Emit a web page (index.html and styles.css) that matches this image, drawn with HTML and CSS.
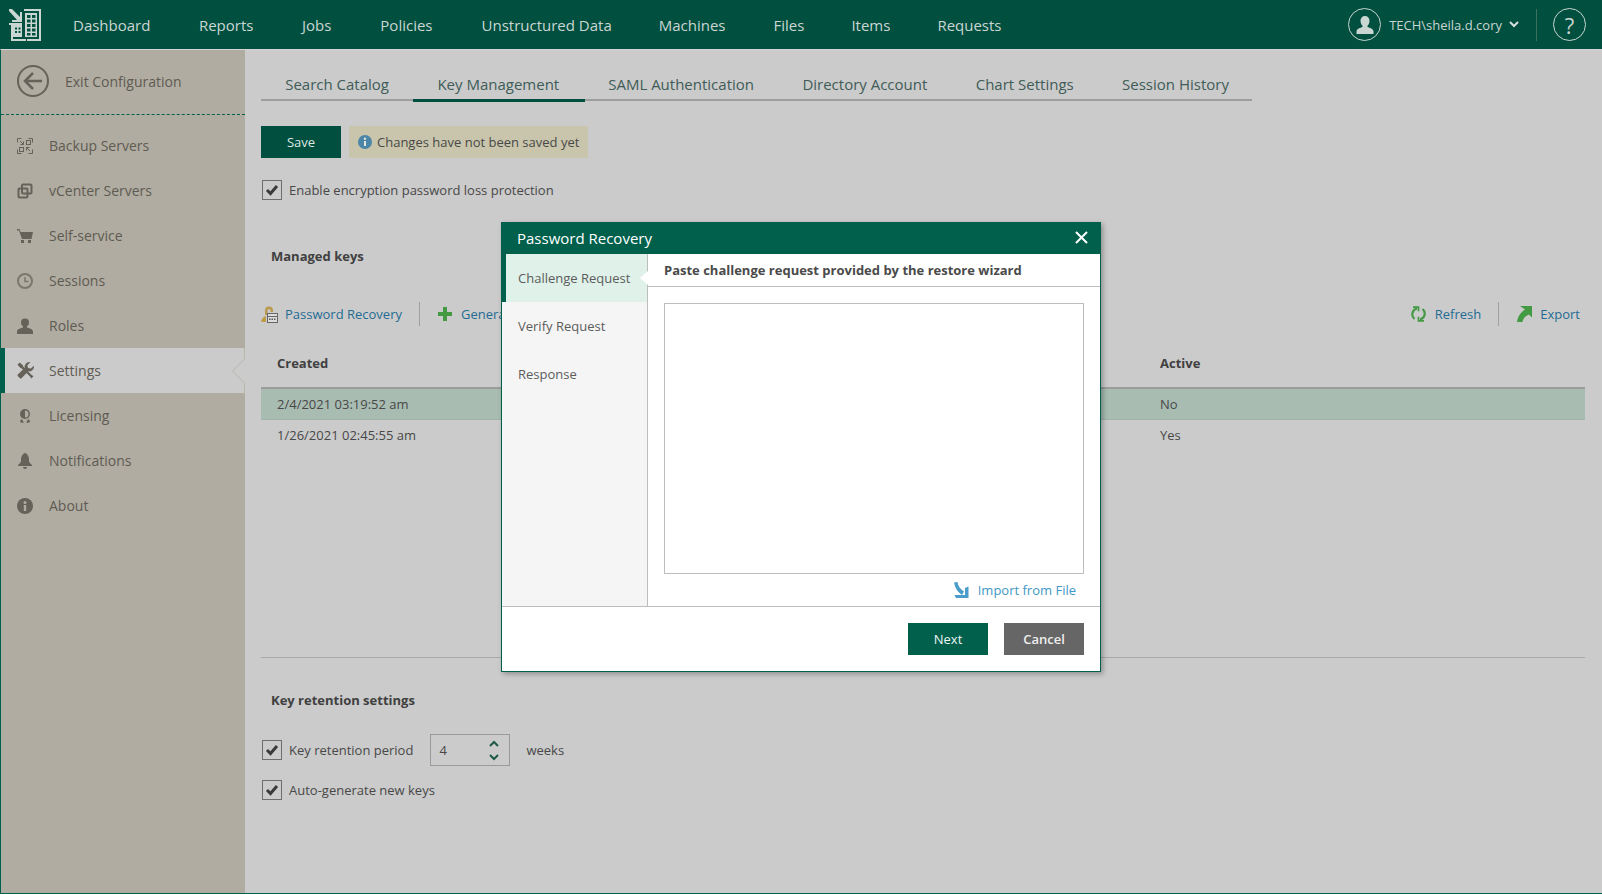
FILE: index.html
```html
<!DOCTYPE html>
<html lang="en">
<head>
<meta charset="utf-8">
<title>Key Management</title>
<link rel="stylesheet" href="styles.css">
</head>
<body>
<header class="topbar">
  <svg class="logo" width="32" height="32" viewBox="0 0 32 32" fill="#c9d6d2"><path d="M15 0h17v32H18v-2h12V2H15z"/><path d="M0 0h3l8 8V3h2v10H3v-2h5L0 2z"/><path d="M0 14h13v2H0zM0 16h2v16h15v-2H4V16z"/><path d="M16 4h12v24H16zM4 16h9v12H4z"/><path d="M18 6h3.500v3H18zM23 6h3.500v3H23zM18 10.500h3.500v3H18zM23 10.500h3.500v3H23zM18 15h3.500v3H18zM23 15h3.500v3H23zM18 19.500h3.500v3H18zM23 19.500h3.500v3H23zM18 24h3.500v2.500H18zM23 24h3.500v2.500H23zM6 18.500h2v2H6zM9.500 18.500h2v2h-2zM6 22h2v2H6zM9.500 22h2v2h-2z" fill="#004f3f"/></svg>
  <nav class="topnav">
    <a>Dashboard</a><a>Reports</a><a>Jobs</a><a>Policies</a><a>Unstructured Data</a><a>Machines</a><a>Files</a><a>Items</a><a>Requests</a>
  </nav>
  <div class="account">
    <span class="round"><svg width="20" height="20" viewBox="0 0 20 20"><path d="M10 1a4.500 4.500 0 0 1 4.500 5c0 2-1 4-2 4.800v1.200c2 1 6 1.500 6 4.500V19h-17v-2.500c0-3 4-3.500 6-4.500v-1.200c-1-.8-2-2.800-2-4.800A4.500 4.500 0 0 1 10 1z" fill="#c9d6d2"/></svg></span>
    <span class="user">TECH\sheila.d.cory</span>
    <svg width="10" height="7" viewBox="0 0 10 7"><path d="M1 1l4 4 4-4" fill="none" stroke="#d5dfdc" stroke-width="2"/></svg>
    <span class="vsep"></span>
    <span class="round help">?</span>
  </div>
</header>
<div class="shell">
  <aside class="sidebar">
    <div class="exit">
      <svg width="32" height="32" viewBox="0 0 32 32"><circle cx="16" cy="16" r="15" fill="none" stroke="#66625a" stroke-width="2"/><path d="M25 16H9M16 8l-8 8 8 8" fill="none" stroke="#66625a" stroke-width="2.500"/></svg>
      <span>Exit Configuration</span>
    </div>
    <ul class="menu">
      <li><svg width="16" height="16" viewBox="0 0 16 16" fill="none" stroke="#66625a"><path d="M.5 4.500v-4h4M11.500.5h4v4M15.500 11.500v4h-4M4.500 15.500h-4v-4"/><path d="M3 3l3.500 3.500M13 13L9.500 9.500M6.500 3.500v3h-3M9.500 12.500v-3h3"/><rect x="9.500" y="2.500" width="4" height="4"/><rect x="2.500" y="9.500" width="4" height="4"/></svg>Backup Servers</li>
      <li><svg width="16" height="16" viewBox="0 0 16 16" fill="none" stroke="#66625a" stroke-width="2"><rect x="5" y="1.500" width="9.500" height="9" rx="1"/><rect x="1.500" y="5.500" width="9" height="9" rx="1"/></svg>vCenter Servers</li>
      <li><svg width="16" height="16" viewBox="0 0 16 16" fill="#66625a"><path d="M0 1h2.500l1 3H16l-1.500 7H5L2 2.500H0z"/><rect x="4" y="12" width="3" height="3"/><rect x="11" y="12" width="3" height="3"/></svg>Self-service</li>
      <li><svg width="16" height="16" viewBox="0 0 16 16" fill="none" stroke="#7b776e" stroke-width="2"><circle cx="8" cy="8" r="7"/><path d="M8 4v4.500h3.500" stroke-width="1.500"/></svg>Sessions</li>
      <li><svg width="16" height="16" viewBox="0 0 16 16" fill="#66625a"><circle cx="8" cy="4.500" r="4"/><path d="M6 8h4v1.500c2 .8 6 1.500 6 4V16H0v-2.500c0-2.500 4-3.200 6-4z"/></svg>Roles</li>
      <li class="current"><svg width="17" height="17" viewBox="0 0 16 16" fill="#66625a"><path d="M2.500 .5L.5 2.500 3 5.500l1.500.5L12 13.500l1.500 2 2-2-2-1.500L6 4.500 5.500 3z"/><path d="M15.800 3.500L13 6.200l-2.700-.5L9.800 3l2.700-2.800a4.300 4.300 0 0 0-5.200 5.200L.5 12v1l2.500 2.500h1l6.600-6.800a4.300 4.300 0 0 0 5.200-5.200z"/></svg>Settings<svg class="pointer" width="13" height="46" viewBox="0 0 13 46" fill="none" stroke="#b9b5a9"><path d="M12.500 0v11L.5 23l12 12v11"/></svg></li>
      <li><svg width="16" height="16" viewBox="0 0 16 16" fill="#66625a"><path d="M3 6a5 5 0 1 1 10 0A5 5 0 0 1 3 6z"/><path d="M8 2.500a3.500 3.500 0 0 1 0 7z" fill="#b0aca1"/><path d="M4 11l2 1.500.5 2.500-2.500-.5-1-.5zM12 11l-2 1.500-.5 2.500 2.500-.5 1-.5z"/></svg>Licensing</li>
      <li><svg width="16" height="16" viewBox="0 0 16 16" fill="#66625a"><path d="M8 0a2 2 0 0 1 2 1.500C12 3 12 5 12 8c0 1.500 2 3 3 4v1H1v-1c1-1 3-2.500 3-4 0-3 0-5 2-6.500A2 2 0 0 1 8 0zM6 14h4a2 2 0 0 1-4 0z"/></svg>Notifications</li>
      <li><svg width="16" height="16" viewBox="0 0 16 16"><circle cx="8" cy="8" r="8" fill="#66625a"/><rect x="6.800" y="7" width="2.400" height="6" fill="#b0aca1"/><circle cx="8" cy="4.500" r="1.500" fill="#b0aca1"/></svg>About</li>
    </ul>
  </aside>
  <main class="content">
    <div class="tabs">
      <a>Search Catalog</a><a class="active">Key Management</a><a>SAML Authentication</a><a>Directory Account</a><a>Chart Settings</a><a>Session History</a>
    </div>
    <div class="savebar">
      <button class="btn dark">Save</button>
      <div class="notice"><svg width="14" height="14" viewBox="0 0 14 14"><circle cx="7" cy="7" r="7" fill="#4b86a8"/><rect x="6" y="6" width="2" height="5" fill="#e4e4d8"/><circle cx="7" cy="3.800" r="1.200" fill="#e4e4d8"/></svg>Changes have not been saved yet</div>
    </div>
    <label class="check first"><span class="box"><svg width="14" height="12" viewBox="0 0 14 12"><path d="M2 6l3.500 3.500L12 2" fill="none" stroke="#3a3a3a" stroke-width="3"/></svg></span>Enable encryption password loss protection</label>
    <h2 class="section managed">Managed keys</h2>
    <div class="toolbar">
      <div class="tools">
        <a class="tool"><svg width="17" height="17" viewBox="0 0 17 17"><path d="M4 9V4.500a4 4 0 0 1 8 0V6H9.500V4.500a1.500 1.500 0 0 0-3 0V9z" fill="#b99a4e"/><path d="M0 14.500l3-4h2V16H1z" fill="#c09b45"/><rect x="6.500" y="7.500" width="10" height="9" fill="#dcdcdc" stroke="#666"/><path d="M6 10.500h10" stroke="#666"/><path d="M8 12.500h1.500v1.500H8zM10.500 12.500H12v1.500h-1.500zM13 12.500h1.500v1.500H13z" fill="#555"/></svg>Password Recovery</a>
        <span class="tsep"></span>
        <a class="tool gen"><svg width="14" height="14" viewBox="0 0 14 14"><path d="M5 0h4v5h5v4H9v5H5V9H0V5h5z" fill="#439a43"/></svg>Generate</a>
      </div>
      <div class="tools">
        <a class="tool refresh"><svg width="15" height="16" viewBox="0 0 15 16" fill="none" stroke="#439a43" stroke-width="2.200"><path d="M3.500 13A6 6 0 0 1 6 2.500M11.500 3a6 6 0 0 1-2.500 10.500"/><path d="M2 1.200h5.500v4M13 14.800H7.500v-4" stroke-width="1.700"/></svg>Refresh</a>
        <span class="tsep"></span>
        <a class="tool export"><svg width="15" height="16" viewBox="0 0 15 16"><path d="M3 0h12v11.500L12 8.500C8.500 10 6 12 5.500 16H0C1 10 4 6 8 3.500z" fill="#439a43"/></svg>Export</a>
      </div>
    </div>
    <div class="table">
      <div class="thead"><span>Created</span><span>Active</span></div>
      <div class="row selected"><span>2/4/2021 03:19:52 am</span><span>No</span></div>
      <div class="row plain"><span>1/26/2021 02:45:55 am</span><span>Yes</span></div>
    </div>
    <h2 class="section retention">Key retention settings</h2>
    <div class="retrow">
      <label class="check"><span class="box"><svg width="14" height="12" viewBox="0 0 14 12"><path d="M2 6l3.500 3.500L12 2" fill="none" stroke="#3a3a3a" stroke-width="3"/></svg></span>Key retention period</label>
      <div class="spinner"><span>4</span><span class="arrows"><svg width="10" height="7" viewBox="0 0 10 7"><path d="M1 6l4-4 4 4" fill="none" stroke="#1f5a48" stroke-width="2"/></svg><svg width="10" height="7" viewBox="0 0 10 7"><path d="M1 1l4 4 4-4" fill="none" stroke="#1f5a48" stroke-width="2"/></svg></span></div>
      <span class="weeks">weeks</span>
    </div>
    <label class="check auto"><span class="box"><svg width="14" height="12" viewBox="0 0 14 12"><path d="M2 6l3.500 3.500L12 2" fill="none" stroke="#3a3a3a" stroke-width="3"/></svg></span>Auto-generate new keys</label>
  </main>
</div>
<section class="dialog">
  <div class="dtitle"><span>Password Recovery</span><svg width="13" height="13" viewBox="0 0 13 13"><path d="M1 1l11 11M12 1L1 12" stroke="#fff" stroke-width="2"/></svg></div>
  <div class="dbody">
    <ul class="steps">
      <li class="on">Challenge Request<span class="notch"></span></li>
      <li>Verify Request</li>
      <li>Response</li>
    </ul>
    <div class="pane">
      <div class="panehead">Paste challenge request provided by the restore wizard</div>
      <div class="panebody">
        <div class="textarea"></div>
        <a class="import"><svg width="15" height="17" viewBox="0 0 15 17" fill="#4a9ccb"><path d="M3.500 0C4 4 6 7 10 9.500L8 13C3.500 10 1 6 0 .5z"/><path d="M14.500 4.500V16H2l-1.500-3H11V6z"/></svg>Import from File</a>
      </div>
    </div>
  </div>
  <div class="dfoot"><button class="btn green">Next</button><button class="btn gray">Cancel</button></div>
</section>
</body>
</html>
```
FILE: styles.css
```css
* { box-sizing: border-box; }
html, body { margin: 0; padding: 0; height: 100%; }
body { width: 1602px; height: 894px; overflow: hidden; font-family: "Open Sans", sans-serif; font-size: 13px; color: #484848; background: #cbcbcb; display: flex; flex-direction: column; position: relative; }
svg { display: block; flex: none; }
ul { list-style: none; margin: 0; padding: 0; }

.topbar { height: 49px; flex: none; background: #004f3f; display: flex; align-items: center; color: #c9d6d2; }
.logo { margin-left: 9px; }
.topnav { display: flex; margin-left: 8px; font-size: 15px; }
.topnav a { padding: 0 24px; }
.topnav a:nth-child(n+2) { margin-left: .5px; }
.topnav a:nth-child(n+4) { margin-left: 1px; }
.topnav a:nth-child(n+6) { margin-left: -1px; }
.topnav a:nth-child(n+7) { margin-left: 0; }
.topnav a:nth-child(n+8) { margin-left: -1px; }
.account { margin-left: auto; display: flex; align-items: center; font-size: 13px; }
.round { width: 33px; height: 33px; border: 1.500px solid #c9d6d2; border-radius: 50%; display: flex; align-items: center; justify-content: center; }
.user { margin: 0 7px 0 8px; }
.vsep { width: 1px; height: 32px; background: #3c7061; margin: 0 16px 0 17px; }
.help { font-size: 22px; margin-right: 16px; }

.shell { flex: 1; display: flex; min-height: 0; border-left: 1px solid #00604c; border-bottom: 1px solid #00604c; border-top: 1px solid #d5d5d5; }
.sidebar { width: 244px; flex: none; background: #b0aca1; color: #5f5b53; font-size: 14px; }
.exit { height: 65px; display: flex; align-items: center; gap: 16px; padding: 0 0 2px 16px; border-bottom: 1px dashed #00604c; }
.exit span { color: #5f5b53; }
.menu { margin-top: 8px; }
.menu li { height: 45px; display: flex; align-items: center; gap: 16px; padding-left: 16px; position: relative; }
.menu li.current { background: #cbcbcb; border-left: 4px solid #00604c; padding-left: 12px; gap: 15px; }
.pointer { position: absolute; right: 0; top: 0; }

.content { flex: 1; padding: 0 17px 0 16px; min-width: 0; }
.tabs { width: 991px; margin-top: 18px; height: 33px; display: flex; border-bottom: 2px solid #9e9e9e; font-size: 15px; color: #3f5c58; line-height: 32px; }
.tabs a { padding: 0 24.2px; white-space: nowrap; }
.tabs a.active { border-bottom: 3px solid #004f3f; height: 34px; padding-right: 26px; }
.tabs a.active + a { padding-left: 23px; }
.savebar { margin-top: 25px; display: flex; gap: 8px; }
.btn { width: 80px; height: 32px; border: 0; padding: 0; font: 13px "Open Sans", sans-serif; color: #dfe8e5; }
.btn.dark { background: #004f3f; }
.notice { height: 32px; background: #c9c5ac; display: flex; align-items: center; gap: 5px; padding: 0 9px 0 9px; color: #484848; }
.check { display: flex; align-items: center; gap: 7px; padding-left: 1px; white-space: nowrap; }
.check.first { margin-top: 22px; }
.box { width: 20px; height: 20px; border: 1px solid #6e6e6e; display: flex; align-items: center; justify-content: center; }
.section { margin: 0; padding-left: 10px; font-size: 13px; font-weight: 700; color: #404040; line-height: 18px; }
.managed { margin-top: 47px; }
.toolbar { margin-top: 37px; height: 24px; display: flex; justify-content: space-between; padding-right: 5px; }
.tools { display: flex; align-items: center; }
.tool { display: flex; align-items: center; gap: 7px; color: #246b94; }
.tool.gen { gap: 9px; }
.tool.refresh { gap: 8.500px; }
.tool.export { gap: 8px; }
.tsep { width: 1px; height: 24px; background: #a0a0a0; margin: 0 18px 0 17px; }
.table { margin-top: 15px; }
.thead { height: 48px; border-bottom: 2px solid #9c9c9c; display: flex; justify-content: space-between; align-items: center; padding: 0 0 2px 16px; font-weight: 700; color: #404040; }
.row { display: flex; justify-content: space-between; align-items: center; padding-left: 16px; }
.row.selected { height: 31px; background: #a8bcb2; border-bottom: 1px solid #a0b3aa; }
.row.plain { height: 30px; }
.thead span:last-child, .row span:last-child { width: 425px; }
.retention { padding-top: 33px; border-top: 1px solid #a8a8a8; margin-top: 207px; padding-left: 0; text-indent: 10px; }
.retrow { margin-top: 25px; display: flex; align-items: center; height: 32px; }
.spinner { width: 80px; height: 32px; margin-left: 17px; border: 1px solid #9a9a9a; display: flex; align-items: center; justify-content: space-between; padding: 0 10px 0 8px; }
.arrows { display: flex; flex-direction: column; gap: 7px; }
.weeks { margin-left: 16px; }
.auto { margin-top: 14px; }

.dialog { position: absolute; left: 501px; top: 222px; width: 600px; height: 450px; background: #fff; border: 1px solid #00604c; box-shadow: 2px 2px 5px rgba(0,0,0,.3); display: flex; flex-direction: column; }
.dtitle { height: 31px; flex: none; background: #00604c; color: #fff; font-size: 15px; display: flex; align-items: center; justify-content: space-between; padding: 0 12px 3px 15px; }
.dtitle span { padding-top: 1px; }
.dbody { height: 353px; flex: none; display: flex; border-bottom: 1px solid #bdbdbd; }
.steps { width: 146px; flex: none; background: #f5f5f5; border-right: 1px solid #bdbdbd; }
.steps li { height: 48px; display: flex; align-items: center; padding-left: 16px; color: #5c5c5c; position: relative; }
.steps li.on { background: #dff1e9; box-shadow: inset 4px 0 0 #00604c; }
.notch { position: absolute; right: -1px; top: 17px; width: 8px; height: 14px; background: #fff; clip-path: polygon(100% 0, 100% 100%, 0 50%); }
.pane { flex: 1; min-width: 0; }
.panehead { height: 33px; border-bottom: 1px solid #bdbdbd; padding: 7px 16px 0; font-weight: 700; color: #4a4a4a; }
.panebody { padding: 16px 16px 0; }
.textarea { height: 271px; border: 1px solid #bdbdbd; }
.import { margin-top: 7px; display: flex; align-items: center; justify-content: flex-end; gap: 9px; padding-right: 8px; color: #3f97c4; }
.dfoot { flex: 1; display: flex; justify-content: flex-end; gap: 16px; padding: 16px 16px 0 0; }
.btn.green { background: #00604c; color: #eef5f3; }
.btn.gray { background: #666; color: #eee; font-weight: 600; }
```
